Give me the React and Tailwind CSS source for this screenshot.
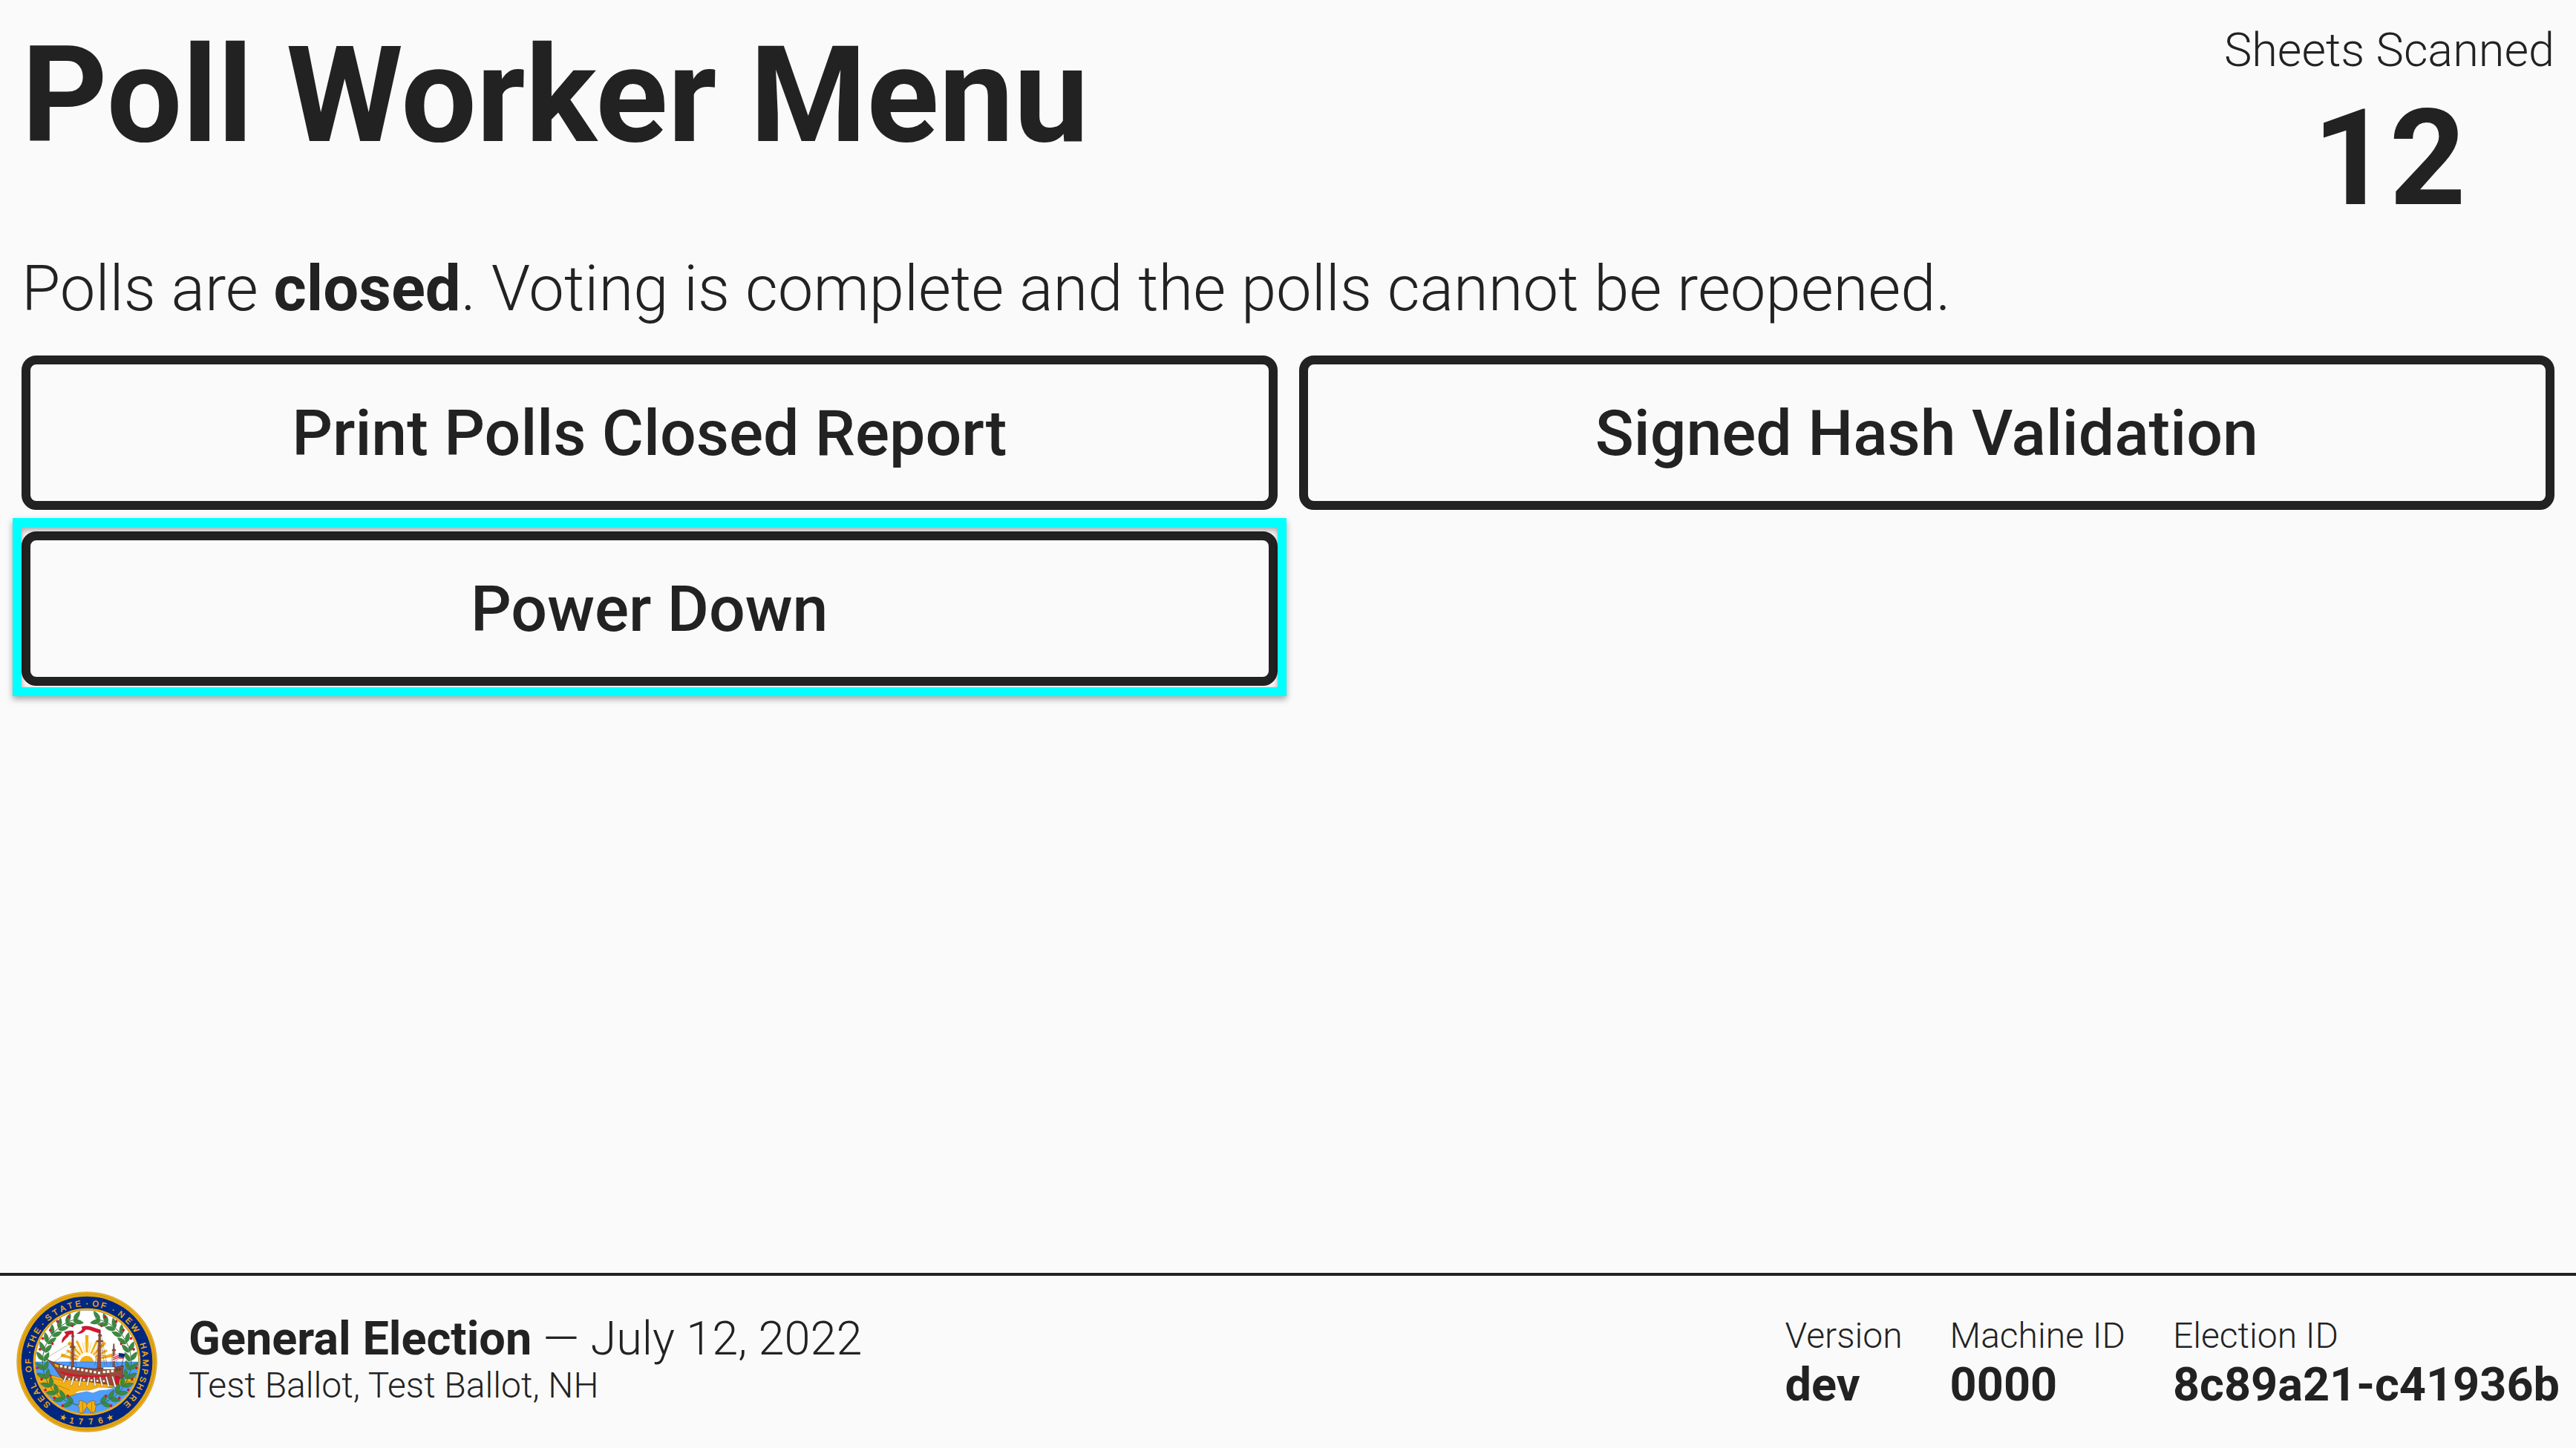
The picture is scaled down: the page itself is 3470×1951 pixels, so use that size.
import React from 'react';

const GOLD = '#f2ae14';
const NAVY = '#00277f';
const GREEN = '#3c8a3f';
const RED = '#d6142c';
const BROWN = '#9c4a38';
const OUTLINE = '#3f2a1e';

const motto = [
  ['S', -137], ['E', -129], ['A', -121], ['L', -114], ['·', -106.5],
  ['O', -97], ['F', -89.5], ['·', -80.5],
  ['T', -74], ['H', -66.5], ['E', -58], ['·', -49.5],
  ['S', -41], ['T', -32.5], ['A', -24.5], ['T', -16.5], ['E', -8.7], ['·', 0],
  ['O', 8.6], ['F', 16.5], ['·', 27],
  ['N', 36], ['E', 45.5], ['W', 55],
  ['H', 74], ['A', 82], ['M', 91], ['P', 99.5], ['S', 107.5], ['H', 115],
  ['I', 121], ['R', 128], ['E', 136.5],
];

const leafAngles = [17, 28, 40, 52, 64, 76, 88, 100, 112, 124, 136, 148, 160];
const berryAngles = [22, 36, 49, 62, 75, 97, 111, 124, 138, 151];
const LEAF = 'M0 0C-11 -8 -12 -26 0 -42C12 -26 11 -8 0 0Z';
const STAR = 'M0 -14L3.3 -4.6L13.3 -4.3L5.3 1.7L8.2 11.3L0 5.6L-8.2 11.3L-5.3 1.7L-13.3 -4.3L-3.3 -4.6Z';

function WreathHalf() {
  return (
    <g>
      <path d="M-34 -175A178 178 0 0 0 -34 175" transform="translate(320 315)" fill="none" stroke="#2d6b31" strokeWidth="3" />
      {leafAngles.map((a) => (
        <g key={a} transform={`translate(320 315) rotate(${-a}) translate(0 -178)`} fill={GREEN} stroke="#1f5a28" strokeWidth="1">
          <path d={LEAF} transform="rotate(52)" />
          <path d={LEAF} transform="translate(-4 4) rotate(118)" />
        </g>
      ))}
      {berryAngles.map((a, i) => (
        <circle key={a} cx="320" cy={i % 2 ? 113 : 119} r="5.5" fill={RED} transform={`rotate(${-a} 320 315)`} />
      ))}
      {berryAngles.filter((_, i) => i % 3 === 0).map((a) => (
        <circle key={a} cx="320" cy="158" r="5" fill={RED} transform={`rotate(${-a} 320 315)`} />
      ))}
    </g>
  );
}

function Seal() {
  return (
    <svg viewBox="36 30 568 570" className="h-[190px] w-[190px] shrink-0" role="img" aria-label="Seal of the State of New Hampshire">
      <defs>
        <clipPath id="seal-inner">
          <circle cx="320" cy="315" r="208" />
        </clipPath>
      </defs>
      <circle cx="320" cy="315" r="283" fill={GOLD} stroke="#a8842a" strokeWidth="1.5" />
      <circle cx="320" cy="315" r="275" fill="none" stroke="#8a6a10" strokeWidth="1.5" />
      <circle cx="320" cy="315" r="269" fill="none" stroke="#8a6a10" strokeWidth="1" />
      <circle cx="320" cy="315" r="265" fill={NAVY} />
      <circle cx="320" cy="315" r="217" fill={GOLD} />
      <circle cx="320" cy="315" r="209" fill="#ffffff" stroke="#6b5a2a" strokeWidth="1.5" />

      <g clipPath="url(#seal-inner)">
        <g stroke={GOLD}>
          {[-75, -60, -43, -26, 0, 26, 43, 60, 75].map((a, i) => (
            <path
              key={a}
              d={i % 2 ? 'M-3 -38L-5 -94L5 -94L3 -38Z' : 'M-3 -38L-7 -108L7 -108L3 -38Z'}
              transform={`translate(320 315) rotate(${a})`}
              fill={GOLD}
              stroke="none"
            />
          ))}
          {[-67, -51, -34, -13, -6, 6, 13, 34, 51, 67].map((a) => (
            <path key={a} d="M0 -38L0 -82" transform={`translate(320 315) rotate(${a})`} strokeWidth="1.5" />
          ))}
        </g>
        <circle cx="320" cy="318" r="28" fill={GOLD} />
        <rect x="100" y="315" width="440" height="210" fill="#4f9dff" />
        <path d="M100 315H540" stroke="#2b5f9e" strokeWidth="1.5" />
        <path d="M100 372C140 362 190 368 235 385L440 388L545 376V400L440 412L372 426L340 430L300 436C280 444 262 452 232 458C190 466 150 450 128 420L100 400Z" fill={GOLD} stroke="#7a5a10" strokeWidth="1.5" />
        <path d="M112 378C160 374 200 384 240 394M120 408C150 398 200 404 250 430M440 396L530 392M460 404L520 402" fill="none" stroke="#8a6a10" strokeWidth="1.5" />
        <path d="M272 440C285 430 305 430 330 430L370 418L432 421L400 428L372 430L345 440L318 434L280 442Z" fill="#ffffff" stroke="#888888" strokeWidth="1" />
      </g>

      <g stroke={OUTLINE} strokeWidth="1" fill="none">
        <path d="M262 235L155 300M262 262L182 320M262 215L250 330M262 215L278 330M372 200L352 330M372 200L392 330M378 205L402 330M429 250L415 330M429 250L444 330" />
        <path d="M250 320H276M252 305H274M254 290H272M356 310H400M360 290H396M363 270H391M367 250H386" />
      </g>
      <g fill={BROWN} stroke={OUTLINE} strokeWidth="1">
        <path d="M260 192H266L268 345H257Z" />
        <path d="M369 190H375L377 348H361Z" />
        <path d="M427 242H431L433 340H424Z" />
        <path d="M252 252H273V258H252ZM360 228H385V234H360ZM422 265H437V270H422Z" />
        <path d="M258 208H268V214H258ZM366 205H380V211H366Z" />
      </g>
      <path d="M265 190C248 187 238 192 229 194C232 199 237 202 235 207C225 213 217 226 220 238C227 232 232 220 244 213C247 203 254 202 265 203Z" fill={RED} stroke="#7a0f1b" strokeWidth="1" />
      <path d="M375 185C350 180 330 164 299 173C303 179 302 183 298 188L280 201C295 202 305 198 316 184C338 183 350 197 374 198Z" fill={RED} stroke="#7a0f1b" strokeWidth="1" />

      <path d="M153 300C178 316 210 326 250 334L350 343L432 337L468 330L462 380L446 384L438 412C390 402 300 390 224 385C206 370 196 345 178 325C170 314 160 308 153 300Z" fill={BROWN} stroke={OUTLINE} strokeWidth="2" />
      <path d="M212 352C260 370 350 376 412 367L411 373C350 382 260 378 216 361Z" fill={RED} />
      <path d="M437 372L452 376L448 408L436 404Z" fill={RED} stroke="#7a0f1b" strokeWidth="1.5" />
      <path d="M187 320L208 328L205 340L192 334Z" fill={GOLD} stroke={OUTLINE} strokeWidth="1" />
      <g fill="#ffffff" stroke={OUTLINE} strokeWidth="1">
        {[211, 228, 245, 262, 279, 296, 313, 330, 347, 364].map((x, i) => (
          <path key={x} d={`M${x} ${327 + i * 3}h11v11h-11Z`} />
        ))}
        <path d="M384 350h12v11h-12ZM400 348h12v12h-12ZM417 346h12v12h-12ZM386 336h46v9h-46Z" />
        <path d="M437 342h8v9h-8ZM449 340h8v9h-8Z" fill="#70463c" />
        <path d="M234 369L240 371L228 400L222 398ZM264 373L270 374L260 410L253 408ZM295 375L300 376L292 414L285 412ZM326 376H332L324 413L317 411ZM347 376H352L357 412L350 413ZM370 375H376L386 413L379 414ZM395 374H401L412 414L405 416ZM420 373H426L440 416L432 418Z" />
        <path d="M244 380h9v9h-9ZM274 382h9v9h-9ZM304 384h9v9h-9ZM334 385h9v9h-9ZM358 387h9v9h-9ZM384 388h9v9h-9Z" />
      </g>
      <g>
        <path d="M426 292L450 280L474 284L468 302L450 302L424 315Z" fill="#ffffff" stroke={RED} strokeWidth="1.5" />
        <path d="M427 299L450 288M426 306L450 296M450 299L469 298" stroke={RED} strokeWidth="4" />
        <path d="M450 279L475 283L470 297L448 295Z" fill={NAVY} />
        <path d="M468 298L460 335" stroke={OUTLINE} strokeWidth="2" />
      </g>

      <WreathHalf />
      <g transform="translate(640 0) scale(-1 1)">
        <WreathHalf />
      </g>
      <path d="M288 472C300 470 310 474 320 486C330 474 342 470 354 474C350 482 350 490 358 492C352 502 356 512 350 518C342 524 334 520 330 508L320 498L312 508C310 520 298 526 290 518C286 510 292 500 284 492C290 488 290 480 288 472Z" fill={GOLD} stroke="#7a5a10" strokeWidth="2" />
      <path d="M304 476C298 490 308 500 302 518M338 476C344 490 334 500 342 518M320 486V498" fill="none" stroke="#7a5a10" strokeWidth="1.5" />

      <g fill={GOLD} fontFamily='"Liberation Sans", Arial, sans-serif' fontSize="33" fontWeight="400" stroke={GOLD} strokeWidth="1.2" textAnchor="middle">
        {motto.map(([ch, angle]) => (
          <text key={angle} x="320" y="89" transform={`rotate(${angle} 320 315)`}>{ch}</text>
        ))}
        {[['1', 260, 551, 13], ['7', 296, 555, 5], ['7', 336, 555, -5], ['6', 375, 551, -13]].map(([ch, x, y, turn]) => (
          <text key={x} x="0" y="12" transform={`translate(${x} ${y}) rotate(${turn})`}>{ch}</text>
        ))}
      </g>
      <path d={STAR} transform="translate(225 540) rotate(20)" fill={GOLD} />
      <path d={STAR} transform="translate(414 540) rotate(-20)" fill={GOLD} />
    </svg>
  );
}

function MenuButton({ children, highlighted }) {
  return (
    <button type="button" className="relative h-[208px] rounded-[20px] border-[12px] border-[#222222] text-[86px] leading-[103px] font-medium">
      {children}
      {highlighted && (
        <span className="pointer-events-none absolute -inset-x-[24px] -top-[30px] -bottom-[26px] border-[12px] border-[#00ffff] drop-shadow-[0_4px_4px_rgba(0,0,0,0.35)]" />
      )}
    </button>
  );
}

function Detail({ label, value }) {
  return (
    <div>
      <dt className="text-[48px] leading-[62px]">{label}</dt>
      <dd className="text-[63px] leading-[70px] font-bold">{value}</dd>
    </div>
  );
}

export default function App() {
  return (
    <div className="flex min-h-screen flex-col bg-[#fafafa] font-[Roboto,sans-serif] font-light text-[#222222]">
      <main className="grow px-[29px] pt-[29px]">
        <header className="flex items-start justify-between">
          <h1 className="text-[180px] leading-[200px] font-bold">Poll Worker Menu</h1>
          <div className="flex flex-col items-center gap-2">
            <span className="text-[63px] leading-[77px]">Sheets Scanned</span>
            <span className="text-[180px] leading-[200px] font-bold">12</span>
          </div>
        </header>
        <p className="mt-6 text-[85px] leading-[103px]">
          Polls are <strong className="font-bold">closed</strong>. Voting is complete and the polls cannot be reopened.
        </p>
        <div className="mt-[38px] grid grid-cols-2 gap-[29px]">
          <MenuButton>Print Polls Closed Report</MenuButton>
          <MenuButton>Signed Hash Validation</MenuButton>
          <MenuButton highlighted>Power Down</MenuButton>
        </div>
      </main>
      <footer className="flex items-center justify-between border-t-4 border-[#222222] px-[22px] py-[21px]">
        <div className="flex items-center gap-[42px]">
          <Seal />
          <div>
            <div className="text-[63px] leading-[64px]">
              <strong className="font-bold">General Election</strong> — July 12, 2022
            </div>
            <div className="text-[48px] leading-[62px]">Test Ballot, Test Ballot, NH</div>
          </div>
        </div>
        <dl className="flex gap-16">
          <Detail label="Version" value="dev" />
          <Detail label="Machine ID" value="0000" />
          <Detail label="Election ID" value="8c89a21-c41936b" />
        </dl>
      </footer>
    </div>
  );
}
